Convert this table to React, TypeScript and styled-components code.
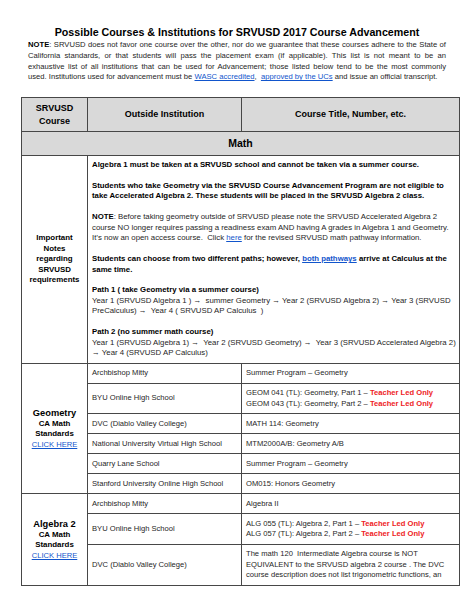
import styled, { createGlobalStyle } from "styled-components";

const GlobalStyle = createGlobalStyle`
  html, body {
    margin: 0;
    padding: 0;
    background: #ffffff;
  }
  body {
    font-family: "Liberation Sans", Arial, sans-serif;
    color: #262626;
  }
`;

const Page = styled.div`
  width: 474px;
  padding-top: 25px;
  box-sizing: border-box;
`;

const Title = styled.h1`
  margin: 0;
  font-size: 10.7px;
  line-height: 14px;
  text-align: center;
  font-weight: bold;
  color: #000;
`;

const Intro = styled.div`
  margin: 1px 28px 0 28px;
  font-size: 7.65px;
  line-height: 10.8px;
`;

const JustLine = styled.span<{ $last?: boolean }>`
  display: block;
  white-space: nowrap;
  text-align: ${(p) => (p.$last ? "left" : "justify")};
  text-align-last: ${(p) => (p.$last ? "left" : "justify")};
`;

const Strong = styled.b`
  color: #000;
`;

const Link = styled.a`
  color: #1155cc;
  text-decoration: underline;
`;

const Red = styled.b`
  color: #ee1c25;
`;

const Table = styled.table`
  margin: 14px 0 0 21px;
  width: 438px;
  border-collapse: collapse;
  table-layout: fixed;
  font-size: 7.6px;
  line-height: 10.5px;
`;

const Col = styled.col<{ $w: number }>`
  width: ${(p) => p.$w}px;
`;

const HeadCell = styled.th`
  background: #d9d9d9;
  border: 1.5px solid #474747;
  font-size: 9px;
  line-height: 12.5px;
  font-weight: bold;
  color: #000;
  text-align: center;
  padding: 4px 4px;
`;

const SectionCell = styled.th`
  background: #d9d9d9;
  border: 1.5px solid #474747;
  font-size: 10.5px;
  line-height: 13px;
  font-weight: bold;
  color: #000;
  text-align: center;
  padding: 5px 4px 5px;
`;

const SideCell = styled.td`
  border: 1.5px solid #474747;
  text-align: center;
  vertical-align: middle;
  padding: 4px 3px;
  font-weight: bold;
  color: #000;
`;

const SideBig = styled.div`
  font-size: 9.3px;
  line-height: 12px;
`;

const SideSmall = styled.div`
  font-size: 7.9px;
  line-height: 10.5px;
`;

const SideLink = styled(Link)`
  display: block;
  font-weight: normal;
  font-size: 7.6px;
  line-height: 10.5px;
`;

const Cell = styled.td`
  border: 1.5px solid #474747;
  padding: 4.5px 4px 4px;
  vertical-align: middle;
  text-align: left;
`;

const NotesCell = styled.td`
  border: 1.5px solid #474747;
  padding: 4px 4px 4px;
  vertical-align: top;
  font-size: 7.8px;
`;

const Para = styled.div<{ $bold?: boolean }>`
  margin: 0 0 10.3px;
  font-weight: ${(p) => (p.$bold ? "bold" : "normal")};
  color: ${(p) => (p.$bold ? "#000" : "#262626")};
  &:last-child {
    margin-bottom: 0;
  }
`;

const Line = styled.span`
  display: block;
  white-space: nowrap;
`;

type Course = { school: string; lines: React.ReactNode[] };

const geometry: Course[] = [
  { school: "Archbishop Mitty", lines: ["Summer Program – Geometry"] },
  {
    school: "BYU Online High School",
    lines: [
      <>GEOM 041 (TL): Geometry, Part 1 – <Red>Teacher Led Only</Red></>,
      <>GEOM 043 (TL): Geometry, Part 2 – <Red>Teacher Led Only</Red></>,
    ],
  },
  { school: "DVC (Diablo Valley College)", lines: ["MATH 114: Geometry"] },
  { school: "National University Virtual High School", lines: ["MTM2000A/B: Geometry A/B"] },
  { school: "Quarry Lane School", lines: ["Summer Program – Geometry"] },
  { school: "Stanford University Online High School", lines: ["OM015: Honors Geometry"] },
];

const algebra2: Course[] = [
  { school: "Archbishop Mitty", lines: ["Algebra II"] },
  {
    school: "BYU Online High School",
    lines: [
      <>ALG 055 (TL): Algebra 2, Part 1 – <Red>Teacher Led Only</Red></>,
      <>ALG 057 (TL): Algebra 2, Part 2 – <Red>Teacher Led Only</Red></>,
    ],
  },
  {
    school: "DVC (Diablo Valley College)",
    lines: [
      "The math 120\u00a0 Intermediate Algebra course is NOT",
      "EQUIVALENT to the SRVUSD algebra 2 course . The DVC",
      "course description does not list trigonometric functions, an",
    ],
  },
];

function SubjectRows({ name, courses }: { name: string; courses: Course[] }) {
  return (
    <>
      {courses.map((c, i) => (
        <tr key={c.school + i}>
          {i === 0 && (
            <SideCell rowSpan={courses.length}>
              <SideBig>{name}</SideBig>
              <SideSmall>CA Math</SideSmall>
              <SideSmall>Standards</SideSmall>
              <SideLink href="#">CLICK HERE</SideLink>
            </SideCell>
          )}
          <Cell>{c.school}</Cell>
          <Cell>
            {c.lines.map((l, j) => (
              <Line key={j}>{l}</Line>
            ))}
          </Cell>
        </tr>
      ))}
    </>
  );
}

export default function App() {
  return (
    <Page>
      <GlobalStyle />
      <Title>Possible Courses &amp; Institutions for SRVUSD 2017 Course Advancement</Title>
      <Intro>
        <JustLine>
          <Strong>NOTE</Strong>: SRVUSD does not favor one course over the other, nor do we
          guarantee that these courses adhere to the State of
        </JustLine>
        <JustLine>
          California standards, or that students will pass the placement exam (if applicable).
          This list is not meant to be an
        </JustLine>
        <JustLine>
          exhaustive list of all institutions that can be used for Advancement; those listed below
          tend to be the most commonly
        </JustLine>
        <JustLine $last>
          used. Institutions used for advancement must be <Link href="#">WASC accredited</Link>
          ,&nbsp; <Link href="#">approved by the UCs</Link> and issue an official transcript.
        </JustLine>
      </Intro>
      <Table>
        <colgroup>
          <Col $w={66} />
          <Col $w={154} />
          <Col $w={218} />
        </colgroup>
        <tbody>
          <tr>
            <HeadCell>
              SRVUSD
              <br />
              Course
            </HeadCell>
            <HeadCell>Outside Institution</HeadCell>
            <HeadCell>Course Title, Number, etc.</HeadCell>
          </tr>
          <tr>
            <SectionCell colSpan={3}>Math</SectionCell>
          </tr>
          <tr>
            <SideCell>
              <SideSmall>Important</SideSmall>
              <SideSmall>Notes</SideSmall>
              <SideSmall>regarding</SideSmall>
              <SideSmall>SRVUSD</SideSmall>
              <SideSmall>requirements</SideSmall>
            </SideCell>
            <NotesCell colSpan={2}>
              <Para $bold>
                <Line>
                  Algebra 1 must be taken at a SRVUSD school and cannot be taken via a summer
                  course.
                </Line>
              </Para>
              <Para $bold>
                <Line>
                  Students who take Geometry via the SRVUSD Course Advancement Program are not
                  eligible to
                </Line>
                <Line>
                  take Accelerated Algebra 2. These students will be placed in the SRVUSD Algebra 2
                  class.
                </Line>
              </Para>
              <Para>
                <Line>
                  <Strong>NOTE</Strong>: Before taking geometry outside of SRVUSD please note the
                  SRVUSD Accelerated Algebra 2
                </Line>
                <Line>
                  course NO longer requires passing a readiness exam AND having A grades in Algebra
                  1 and Geometry.
                </Line>
                <Line>
                  It’s now an open access course.&nbsp; Click <Link href="#">here</Link> for the
                  revised SRVUSD math pathway information.
                </Line>
              </Para>
              <Para $bold>
                <Line>
                  Students can choose from two different paths; however,{" "}
                  <Link href="#">both pathways</Link> arrive at Calculus at the
                </Line>
                <Line>same time.</Line>
              </Para>
              <Para>
                <Line>
                  <Strong>Path 1 ( take Geometry via a summer course)</Strong>
                </Line>
                <Line>
                  Year 1 (SRVUSD Algebra 1 ) →&nbsp; summer Geometry → Year 2 (SRVUSD Algebra 2) →
                  Year 3 (SRVUSD
                </Line>
                <Line>PreCalculus) →&nbsp; Year 4 ( SRVUSD AP Calculus&nbsp; )</Line>
              </Para>
              <Para>
                <Line>
                  <Strong>Path 2 (no summer math course)</Strong>
                </Line>
                <Line>
                  Year 1 (SRVUSD Algebra 1) →&nbsp; Year 2 (SRVUSD Geometry) →&nbsp; Year 3 (SRVUSD
                  Accelerated Algebra 2)
                </Line>
                <Line>→ Year 4 (SRVUSD AP Calculus)</Line>
              </Para>
            </NotesCell>
          </tr>
          <SubjectRows name="Geometry" courses={geometry} />
          <SubjectRows name="Algebra 2" courses={algebra2} />
        </tbody>
      </Table>
    </Page>
  );
}
